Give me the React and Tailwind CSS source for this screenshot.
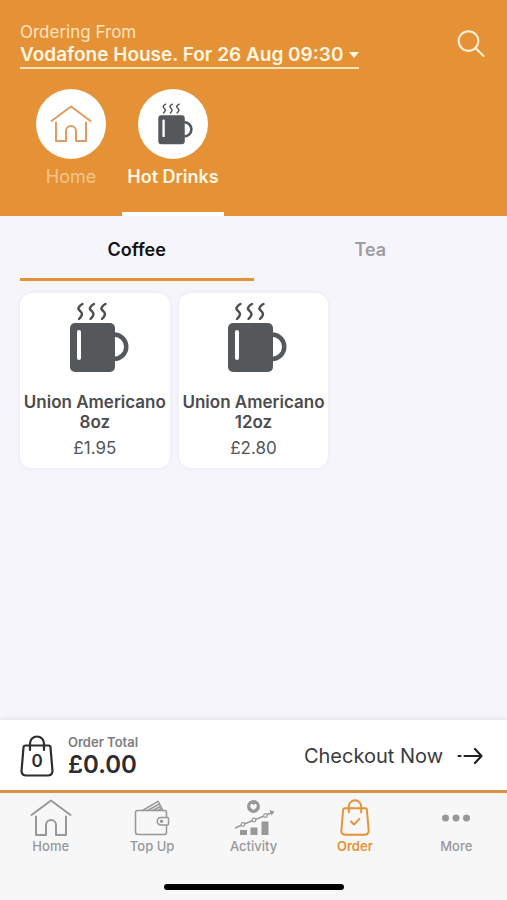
import React, { useState } from "react";

const HouseIcon = ({ className }) => (
  <svg
    viewBox="0 0 42 38"
    className={className}
    fill="none"
    stroke="currentColor"
    strokeWidth="2"
    strokeLinecap="round"
    strokeLinejoin="round"
  >
    <path d="M1.5 16 21 1.5 40.5 16" />
    <path d="M6 17.500v18.500h10V26a5 5 0 0 1 10 0v10h10V17.500" />
  </svg>
);

const MugIcon = ({ className }) => (
  <svg viewBox="-8 0 68 72" className={className} fill="none">
    <g stroke="#4b4e51" strokeWidth="2.4" strokeLinecap="round" strokeLinejoin="round">
      <path d="M13.500 2c-2 1-4.500 3.500-4 5s3.500 3 3.500 5-1.500 3.500-3 5" />
      <path d="M25 2c-2 1-4.500 3.500-4 5s3.500 3 3.500 5-1.500 3.500-3 5" />
      <path d="M36.500 2c-2 1-4.500 3.500-4 5s3.500 3 3.500 5-1.500 3.500-3 5" />
    </g>
    <rect x="1" y="21" width="45" height="49" rx="5" fill="#55585b" />
    <rect x="8" y="28" width="4" height="30" rx="2" fill="#fff" />
    <path d="M45 32.500a12 12 0 0 1 0 24.500" stroke="#55585b" strokeWidth="4.500" />
  </svg>
);

const BagIcon = ({ className, children }) => (
  <svg
    viewBox="0 0 34 42"
    className={className}
    fill="none"
    stroke="currentColor"
    strokeWidth="2.2"
    strokeLinecap="round"
    strokeLinejoin="round"
  >
    <path d="M5.500 10.500h23a2 2 0 0 1 2 2L32.500 36q0 4.500-5 4.500h-21q-5 0-5-4.500L3.500 12.500a2 2 0 0 1 2-2Z" />
    <path d="M10 15V8.500a7 7 0 0 1 14 0V15" />
    {children}
  </svg>
);

const WalletIcon = ({ className }) => (
  <svg
    viewBox="0 0 36 36"
    className={className}
    fill="none"
    stroke="currentColor"
    strokeWidth="1.5"
    strokeLinecap="round"
    strokeLinejoin="round"
  >
    <path d="M32.500 17v-4.500q0-2-2-2H3.500q-2 0-2 2v19.500q0 2.500 2.500 2.500h26.500q2 0 2-2v-7" />
    <path d="M34.500 18.500v5.500q0 1-1 1H27a3.500 3.500 0 0 1 0-7.500h6.500q1 0 1 1Z" />
    <circle cx="27.500" cy="21.300" r="1" fill="currentColor" />
    <path d="M8.500 10.500 24 1.300l5 9.200" />
    <path d="M13.500 10.500 25.500 4M18.500 10.500l8-4M23.500 10.500l4-2" />
  </svg>
);

const ActivityIcon = ({ className }) => (
  <svg viewBox="0 0 42 38" className={className} fill="none">
    <circle cx="20.500" cy="7.500" r="6.500" fill="currentColor" />
    <path
      d="M20.500 11c-2-1.400-3.300-2.500-3.300-4.100 0-2 2.400-2.400 3.300-.8.900-1.600 3.300-1.200 3.300.8 0 1.600-1.300 2.700-3.300 4.100Z"
      fill="#f7f7f7"
    />
    <path d="M2 29 10 25.500 21 21l11.500-4.500L39 13.500" stroke="currentColor" strokeWidth="1.400" />
    <path d="m36.500 11 5 1.500-3 4Z" fill="currentColor" />
    <g fill="#f7f7f7" stroke="currentColor" strokeWidth="1.200">
      <circle cx="10" cy="25.500" r="1.800" />
      <circle cx="21" cy="21" r="1.800" />
      <circle cx="32.500" cy="16.500" r="1.800" />
    </g>
    <g fill="currentColor">
      <rect x="7" y="31" width="7" height="5" />
      <rect x="17.500" y="28.500" width="7" height="7.500" />
      <rect x="28.500" y="22.500" width="7" height="13.500" />
    </g>
  </svg>
);

const DotsIcon = ({ className }) => (
  <svg viewBox="0 0 28 8" className={className} fill="currentColor">
    <circle cx="3.500" cy="4" r="3.500" />
    <circle cx="14" cy="4" r="3.500" />
    <circle cx="24.500" cy="4" r="3.500" />
  </svg>
);

const categories = [
  { name: "Home", icon: <HouseIcon className="w-[42px] text-[#e39a63]" /> },
  { name: "Hot Drinks", icon: <MugIcon className="w-10" /> },
];

const products = [
  { name: "Union Americano 8oz", price: "£1.95" },
  { name: "Union Americano 12oz", price: "£2.80" },
];

const navItems = [
  { name: "Home", icon: <HouseIcon className="w-[42px]" /> },
  { name: "Top Up", icon: <WalletIcon className="w-9" /> },
  { name: "Activity", icon: <ActivityIcon className="w-[42px]" /> },
  {
    name: "Order",
    icon: (
      <BagIcon className="w-[30px]">
        <path d="m12.500 25.500 3.500 3.500 6-6.500" />
      </BagIcon>
    ),
  },
  { name: "More", icon: <DotsIcon className="w-7" /> },
];

const App = () => {
  const [category, setCategory] = useState("Hot Drinks");
  const [tab, setTab] = useState("Coffee");

  return (
    <div className="flex min-h-screen flex-col bg-[#f6f5fb] font-['Inter',sans-serif]">
      <header className="bg-[#e49235] px-5 pt-[22px]">
        <div className="flex items-start justify-between">
          <div>
            <p className="text-[17px] leading-5 text-[#fce3c0]">Ordering From</p>
            <button className="flex items-center gap-[6px] border-b-2 border-[#fce3c0] pt-px text-[19px] leading-6 font-semibold text-[#fff6e4]">
              Vodafone House. For 26 Aug 09:30
              <svg viewBox="0 0 10 6" className="w-[10px]" fill="currentColor">
                <path d="M0 0h10L5 6Z" />
              </svg>
            </button>
          </div>
          <button aria-label="Search" className="mt-2 mr-[2px]">
            <svg
              viewBox="0 0 28 28"
              className="w-7 text-[#fff1dc]"
              fill="none"
              stroke="currentColor"
              strokeWidth="2"
              strokeLinecap="round"
            >
              <circle cx="11.500" cy="11" r="9.800" />
              <path d="m18.500 18 8 8" />
            </svg>
          </button>
        </div>

        <nav className="mt-5 flex">
          {categories.map((c) => (
            <button
              key={c.name}
              onClick={() => setCategory(c.name)}
              className={`flex w-[102px] flex-col items-center border-b-4 pb-[25px] ${
                category === c.name
                  ? "border-white font-semibold text-[#fff6e4]"
                  : "border-transparent text-[#f5c48c]"
              }`}
            >
              <span className="flex size-[70px] items-center justify-center rounded-full bg-white">
                {c.icon}
              </span>
              <span className="mt-2 text-lg leading-5 whitespace-nowrap">{c.name}</span>
            </button>
          ))}
        </nav>
      </header>

      <main className="flex-1 px-5">
        <div className="flex">
          {["Coffee", "Tea"].map((t) => (
            <button
              key={t}
              onClick={() => setTab(t)}
              className={`flex-1 border-b-[3px] pt-6 pb-[18px] text-lg leading-5 font-semibold ${
                tab === t
                  ? "border-[#e49235] text-[#111111]"
                  : "border-transparent text-[#9c9ca1]"
              }`}
            >
              {t}
            </button>
          ))}
        </div>

        <div className="mt-3 grid grid-cols-3 gap-[9px]">
          {products.map((p) => (
            <button
              key={p.name}
              className="flex flex-col items-center rounded-xl bg-white pt-[9px] pb-2 shadow-[0_0_4px_rgba(60,60,120,0.08)]"
            >
              <MugIcon className="w-[68px]" />
              <span className="mt-[18px] text-[17px] leading-5 font-semibold text-[#4c4c4e]">
                {p.name}
              </span>
              <span className="mt-1 text-[17px] leading-6 text-[#555557]">{p.price}</span>
            </button>
          ))}
        </div>
      </main>

      <section className="flex items-center justify-between border-b-[3px] border-[#d99246] bg-white pt-[13px] pr-6 pb-[11px] pl-5 shadow-[0_-1px_5px_rgba(60,60,90,0.12)]">
        <div className="flex items-center gap-[14px]">
          <span className="relative text-[#2d2d2f]">
            <BagIcon className="w-[34px]" />
            <span className="absolute inset-x-0 top-4 text-center text-[17px] leading-5 font-semibold">
              0
            </span>
          </span>
          <div>
            <p className="text-[13px] leading-[18px] font-semibold text-[#7d7d7f]">Order Total</p>
            <p className="text-2xl leading-7 font-semibold text-[#2d2d2f]">£0.00</p>
          </div>
        </div>
        <button className="flex items-center gap-[14px] text-xl text-[#3a3a3c]">
          Checkout Now
          <svg
            viewBox="0 0 26 18"
            className="w-[26px]"
            fill="none"
            stroke="#222224"
            strokeWidth="2.2"
            strokeLinecap="round"
            strokeLinejoin="round"
          >
            <path d="M1.500 9h2M7.500 9h17M18 2l6.500 7-6.500 7" />
          </svg>
        </button>
      </section>

      <footer className="bg-[#f7f7f7] pb-[10px]">
        <nav className="flex">
          {navItems.map((n) => (
            <a
              key={n.name}
              href="#"
              className={`flex flex-1 flex-col items-center pt-[5px] text-[13px] leading-4 ${
                n.name === "Order"
                  ? "font-semibold text-[#e49235]"
                  : "font-medium text-[#98989a]"
              }`}
            >
              <span className="flex h-10 items-center">{n.icon}</span>
              {n.name}
            </a>
          ))}
        </nav>
        <div className="mx-auto mt-[30px] h-[6px] w-[180px] rounded-full bg-black" />
      </footer>
    </div>
  );
};

export default App;
